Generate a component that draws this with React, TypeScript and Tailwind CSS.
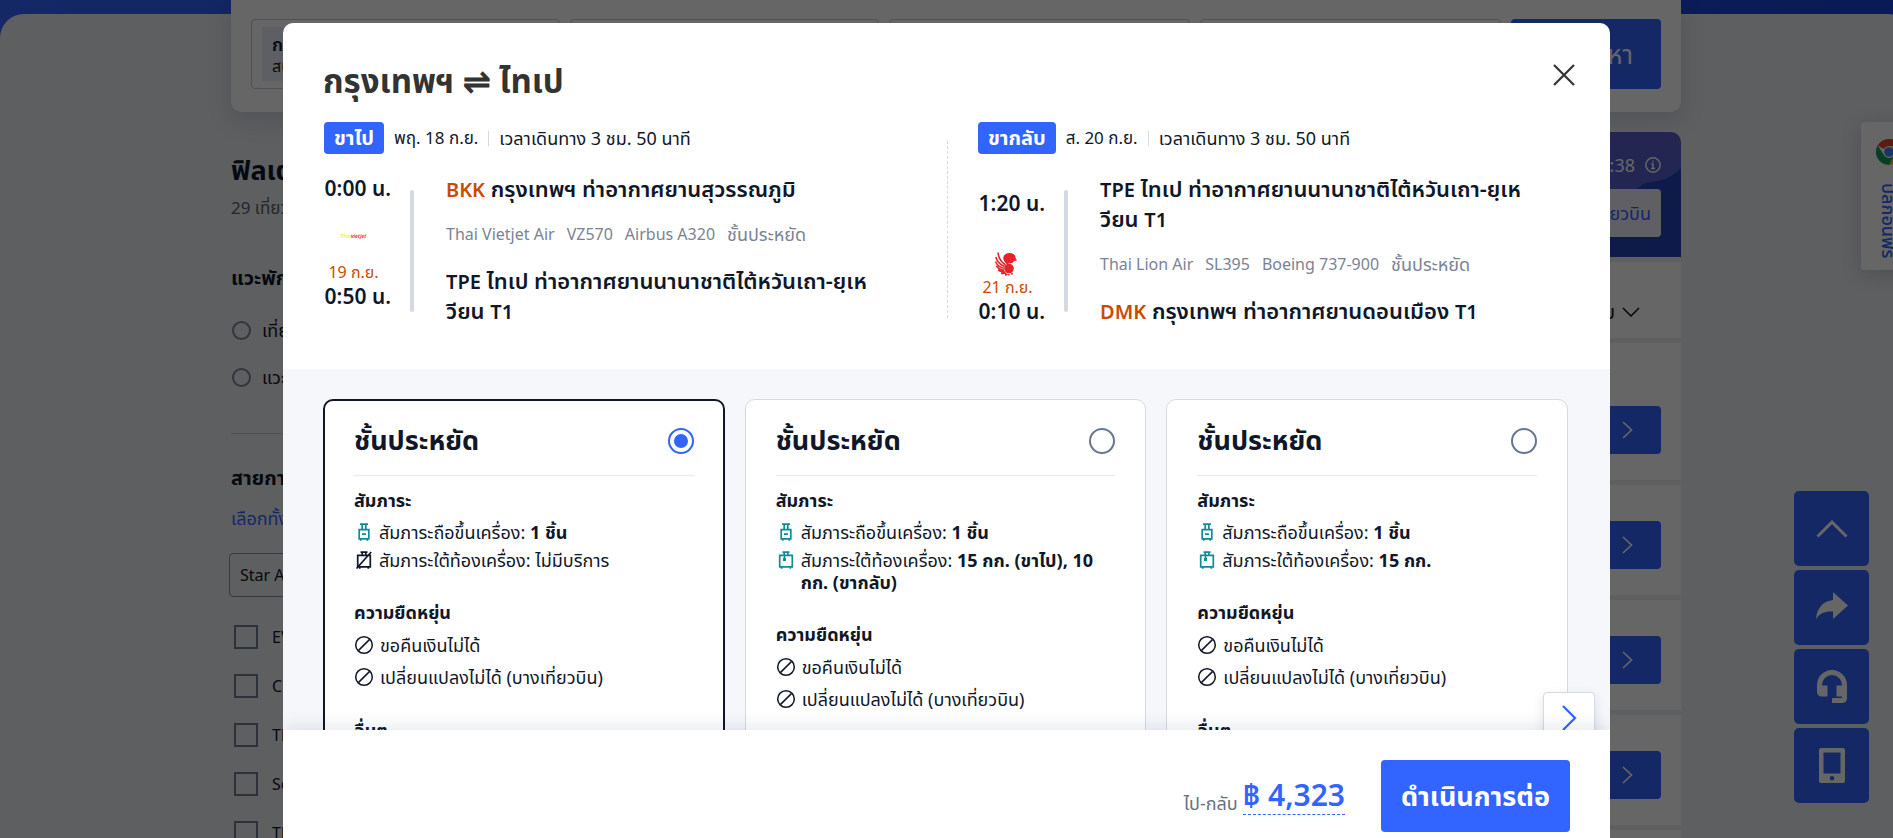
import type { ReactNode } from "react";

type Leg = {
    label: string;
    date: string;
    depart: string;
    arrive: string;
    arriveDate: string;
    from: ReactNode;
    to: ReactNode;
    details: string[];
    logo: ReactNode;
    tall?: boolean;
};

type Fare = {
    id: string;
    checked: ReactNode;
    noBag?: boolean;
};

const Code = ({ children }: { children: ReactNode }) => <span className="text-xl leading-none text-[#cc4a00]">{children}</span>;

const VietjetLogo = () => (
    <svg viewBox="0 0 28 8" className="h-2 w-7" aria-label="Thai Vietjet Air">
        <text x="0" y="6" fontSize="6" fontStyle="italic" fontWeight="700" fill="#fbf04a">Thai</text>
        <text x="11" y="6" fontSize="5" fontStyle="italic" fontWeight="700" fill="#f0323c">vietjet</text>
    </svg>
);

const LionLogo = () => (
    <svg viewBox="0 0 22 24" className="h-6 w-[22px]" aria-label="Thai Lion Air">
        <path d="M8.500 4.500C10 1 15 0 18.500 2c1.500 1 2 2.500 2 4l1.500 2.500-3 .5c-.5 1.500-2 2.200-4 2.200-1.200 0-2 .3-3 1.300C9.500 10.500 7.500 7.500 8.500 4.500z" fill="#e8222b" />
        <circle cx="14" cy="16.500" r="4.800" fill="#e8222b" />
        <path d="M3 .5c.5 5 3 9.500 7.500 12.500M.8 5c1 4 4 7.500 8.700 9.500M.5 9.500c1.500 3.500 4.500 6 8.500 6.800M1.200 14c2 2.500 4.500 4 8 4.200M3 18c2 1.300 4 2 6.800 1.900M6 21.200c1.600.4 3.200.2 5-.2M10 23.300l2.500-1.300M14 23.500v-1.500M17.500 22.500l-1-1.500" fill="none" stroke="#e8222b" strokeWidth="1.600" />
    </svg>
);

const CabinBag = () => (
    <svg viewBox="0 0 18 18" className="h-[18px] w-[18px]" fill="none" stroke="#0f8c94" strokeWidth="1.700">
        <path d="M5 1.200h8M7.200 1.500v5M10.800 1.500v5M4.200 6.700h9.600v9.200H4.200zM7 11.200h4M5.700 16v1.800M12.300 16v1.800" />
    </svg>
);

const CheckedBag = () => (
    <svg viewBox="0 0 18 18" className="h-[18px] w-[18px]" fill="none" stroke="#0f8c94" strokeWidth="1.700">
        <path d="M5.500 1.200h7M7.200 1.500v3M10.800 1.500v3M2.700 4.300h12.600v11.600H2.700zM4.700 16v1.800M13.300 16v1.800" />
        <path d="M6 7h3v3H6z" fill="#0f8c94" stroke="none" />
        <path d="M7.500 4v3" />
    </svg>
);

const NoBag = () => (
    <svg viewBox="0 0 18 18" className="h-[18px] w-[18px]" fill="none" stroke="#0f1728" strokeWidth="1.700">
        <path d="M5.500 1.200h7M7.200 1.500v3M10.800 1.500v3M2.700 4.300h12.600v11.600H2.700zM4.700 16v1.800M13.300 16v1.800M1.500 17.500L16.200 1" />
    </svg>
);

const Ban = () => (
    <svg viewBox="0 0 20 20" className="h-5 w-5 shrink-0" fill="none" stroke="#0f1728" strokeWidth="1.500">
        <circle cx="10" cy="10" r="8.300" />
        <path d="M4.600 15.400L15.400 4.600" />
    </svg>
);

const ChromeLogo = () => (
    <svg viewBox="0 0 26 26" className="h-[26px] w-[26px] shrink-0">
        <path d="M13 13L1.700 6.500A13 13 0 0 1 24.300 6.500z" fill="#ea4335" />
        <path d="M13 7h11.500A13 13 0 0 1 13 26l6-10z" fill="#fbbc05" />
        <path d="M13 19v7A13 13 0 0 1 1.700 6.500L8 16zM13 26l5.500-10L13 13z" fill="#0f9d58" />
        <circle cx="13" cy="13" r="6" fill="#fff" />
        <circle cx="13" cy="13" r="4.800" fill="#4285f4" />
    </svg>
);

const airportTpe = (
    <>
        <span className="text-xl leading-none">TPE</span> ไทเป ท่าอากาศยานนานาชาติไต้หวันเถา-ยฺเห
        <br />
        วียน <span className="text-xl leading-none">T1</span>
    </>
);

const legs: Leg[] = [
    {
        label: "ขาไป",
        date: "พฤ. 18 ก.ย.",
        depart: "20:00 น.",
        arrive: "00:50 น.",
        arriveDate: "19 ก.ย.",
        from: <><Code>BKK</Code> กรุงเทพฯ ท่าอากาศยานสุวรรณภูมิ</>,
        to: airportTpe,
        details: ["Thai Vietjet Air", "VZ570", "Airbus A320"],
        logo: <VietjetLogo />,
    },
    {
        label: "ขากลับ",
        date: "ส. 20 ก.ย.",
        depart: "21:20 น.",
        arrive: "00:10 น.",
        arriveDate: "21 ก.ย.",
        from: airportTpe,
        to: <><Code>DMK</Code> กรุงเทพฯ ท่าอากาศยานดอนเมือง <span className="text-xl leading-none">T1</span></>,
        details: ["Thai Lion Air", "SL395", "Boeing 737-900"],
        logo: <LionLogo />,
        tall: true,
    },
];

const fares: Fare[] = [
    { id: "fare-1", checked: "ไม่มีบริการ", noBag: true },
    { id: "fare-2", checked: <b>15 กก. (ขาไป), 10 กก. (ขากลับ)</b> },
    { id: "fare-3", checked: <b>15 กก.</b> },
];

const airlines = ["EVA Air", "China Airlines", "Thai Lion Air", "Scoot", "Thai Vietjet Air"];

function SearchBar() {
    return (
        <div className="mx-auto flex h-28 w-[1450px] items-start gap-[10px] rounded-b-[10px] bg-white px-5 pt-[19px] shadow-[0_8px_24px_rgba(15,41,77,0.16)]">
            <div className="h-[70px] w-[309px] rounded border border-[#c5cad5] px-[10px] py-[7px]">
                <div className="h-[54px] bg-[#eceefa] px-[10px] pt-[5px]">
                    <p className="text-lg leading-6 font-semibold">กรุงเทพฯ</p>
                    <p className="text-base leading-5">สนามบินทั้งหมด</p>
                </div>
            </div>
            <div className="h-[70px] w-[309px] rounded border border-[#c5cad5]" />
            <div className="h-[70px] flex-1 rounded border border-[#c5cad5]" />
            <div className="h-[70px] flex-1 rounded border border-[#c5cad5]" />
            <button className="h-[70px] w-[150px] rounded bg-[#3264ff] pr-7 text-right text-[26px] text-white">ค้นหา</button>
        </div>
    );
}

function Filters() {
    return (
        <aside className="w-[310px] shrink-0 pt-[22px]">
            <h2 className="text-[27px] leading-8 font-bold">ฟิลเตอร์</h2>
            <p className="mt-[10px] text-[17px] leading-6 text-[#5a6172]">29 เที่ยวบิน</p>
            <h3 className="mt-[46px] text-xl leading-6 font-bold">แวะพัก</h3>
            {["เที่ยวบินตรง", "แวะพัก 1 ครั้ง"].map((stop, i) => (
                <div key={stop} className={i === 0 ? "mt-[28px] flex h-6 items-center gap-[11px]" : "mt-[23px] flex h-6 items-center gap-[11px]"}>
                    <input type="radio" name="stops" id={stop} className="ml-px h-[19px] w-[19px] appearance-none rounded-full border-2 border-[#7c879c]" />
                    <label htmlFor={stop} className="text-lg">{stop}</label>
                </div>
            ))}
            <hr className="mt-11 border-[#c5cad5]" />
            <h3 className="mt-8 text-xl leading-6 font-bold">สายการบิน</h3>
            <button className="mt-4 block text-lg leading-6 text-[#3264ff]">เลือกทั้งหมด</button>
            <select aria-label="พันธมิตรสายการบิน" className="mt-[23px] -ml-[2px] block h-11 w-full appearance-none rounded border border-[#8592a6] px-[10px] text-base">
                <option>Star Alliance</option>
            </select>
            <div className="mt-7 flex flex-col gap-[25px]">
                {airlines.map((name) => (
                    <label key={name} className="flex h-6 items-center gap-[14px] text-base whitespace-nowrap">
                        <input type="checkbox" className="ml-[3px] h-6 w-6 appearance-none border-2 border-[#707c92]" />
                        {name}
                    </label>
                ))}
            </div>
        </aside>
    );
}

function Results() {
    return (
        <div className="flex flex-1 flex-col gap-[5px]">
            <div className="relative flex h-[125px] flex-col items-end overflow-hidden rounded-t-[10px] bg-linear-to-b from-[#5a5fc8] to-[#565cd8] px-5 pt-5 text-white">
                <svg viewBox="0 0 140 125" className="absolute right-0 bottom-0 h-[125px] w-[140px]">
                    <path d="M140 36c-8 8-16 12-24 13-8 2-14 1-17 6-12 8-60 20-99 24v46h140z" fill="#2543b8" />
                </svg>
                <div className="relative flex h-[26px] items-center gap-[10px] text-lg">
                    05:12:38
                    <svg viewBox="0 0 16 16" className="h-4 w-4" fill="none" stroke="currentColor" strokeWidth="1.500">
                        <circle cx="8" cy="8" r="7.200" />
                        <path d="M6.200 7H8v4.400M6 11.600h4M7.200 4.400h1.400" />
                    </svg>
                </div>
                <button className="relative mt-[11px] h-12 rounded bg-[#eff0fb] px-[10px] text-lg text-[#3264ff]">ค้นหาเที่ยวบิน</button>
            </div>
            <div className="flex h-[76px] items-center justify-end gap-[7px] bg-white pt-6 pr-[41px]">
                <div className="text-xl leading-6">เรียงลำดับ</div>
                <svg viewBox="0 0 18 10" className="h-[10px] w-[18px]" fill="none" stroke="currentColor" strokeWidth="1.600"><path d="M1 1l8 8 8-8" /></svg>
            </div>
            {[0, 1, 2, 3, 4].map((n) => (
                <div key={n} className={n === 0 ? "flex h-[137px] items-end justify-end bg-white px-5 pb-[26px]" : "flex h-[110px] items-end justify-end bg-white px-5 pb-[26px]"}>
                    <button className="flex h-12 w-[150px] items-center justify-end gap-3 rounded bg-[#3264ff] pr-7 text-xl text-white">
                        เลือก
                        <svg viewBox="0 0 11 18" className="h-[18px] w-[11px]" fill="none" stroke="currentColor" strokeWidth="1.700"><path d="M1 1l8.500 8L1 17" /></svg>
                    </button>
                </div>
            ))}
        </div>
    );
}

function SideTools() {
    return (
        <>
            <a href="#plugin" className="absolute top-[122px] left-[calc(100%-32px)] flex h-[148px] w-14 flex-col items-center gap-[18px] rounded-l-[3px] bg-white pt-[17px] text-[#3264ff] shadow-[0_4px_20px_rgba(15,41,77,0.2)]">
                <ChromeLogo />
                <span className="text-lg leading-5 font-medium whitespace-nowrap [writing-mode:vertical-rl]">ปลั๊กอินฟรี</span>
            </a>
            <div className="absolute top-[491px] right-6 flex flex-col gap-1">
                <button aria-label="กลับด้านบน" className="grid h-[75px] w-[75px] place-items-center rounded-[5px] bg-[#3264ff] text-white">
                    <svg viewBox="0 0 32 18" className="h-[18px] w-8" fill="none" stroke="currentColor" strokeWidth="3"><path d="M1.500 16.500L16 2.200l14.500 14.300" /></svg>
                </button>
                <button aria-label="แชร์" className="grid h-[75px] w-[75px] place-items-center rounded-[5px] bg-[#3264ff] pb-1 text-white">
                    <svg viewBox="0 0 32 27" className="h-[27px] w-8" fill="currentColor"><path d="M17 0l15 13.500L17 27v-7.500C9 19 4 21 0 27 1 16 7 9 17 8z" /></svg>
                </button>
                <button aria-label="บริการลูกค้า" className="grid h-[75px] w-[75px] place-items-center rounded-[5px] bg-[#3264ff] text-white">
                    <svg viewBox="0 0 30 33" className="h-[33px] w-[30px]" fill="currentColor"><path d="M15 0C6.700 0 0 6.700 0 15v7a4.500 4.500 0 0 0 4.500 4.500H10.500V15.500H5V15a10 10 0 0 1 20 0v.5h-5.500v11H25V28H15v5h10.500a4.500 4.500 0 0 0 4.500-4.500V15C30 6.700 23.300 0 15 0z" /></svg>
                </button>
                <button aria-label="แอป" className="grid h-[75px] w-[75px] place-items-center rounded-[5px] bg-[#3264ff] text-white">
                    <svg viewBox="0 0 26 35" className="h-[35px] w-[26px]" fill="currentColor" fillRule="evenodd"><path d="M2 0h22a2 2 0 0 1 2 2v31a2 2 0 0 1-2 2H2a2 2 0 0 1-2-2V2a2 2 0 0 1 2-2zM4.500 4.500V25.500h17V4.500zM13 28a2.200 2.200 0 1 0 0 4.400 2.200 2.200 0 0 0 0-4.400z" /></svg>
                </button>
            </div>
        </>
    );
}

function LegInfo({ leg }: { leg: Leg }) {
    return (
        <section>
            <div className="flex h-8 items-center text-[17px] text-[#0f1728]">
                <span className="mr-[10px] flex h-8 items-center rounded bg-[#3264ff] px-[10px] text-xl font-bold text-white">{leg.label}</span>
                {leg.date}
                <span className="mx-[10px] h-[15px] w-px bg-[#d5d9e2]" />
                <span className="text-lg">เวลาเดินทาง 3 ชม. 50 นาที</span>
            </div>
            <div className="mt-[19px] flex text-[21px] font-semibold text-[#0f1728]">
                <div className="flex w-[67px] flex-col items-end overflow-hidden">
                    <div className={leg.tall ? "flex h-[45px] items-end leading-[30px] whitespace-nowrap" : "flex h-[30px] items-end leading-[30px] whitespace-nowrap"}>{leg.depart}</div>
                    <div className={leg.tall ? "grid h-[58px] w-full place-items-end justify-center pr-3" : "grid h-[58px] w-full place-items-center pt-2 pr-2"}>{leg.logo}</div>
                    <div className="w-full pr-2 text-center text-base leading-[22px] font-normal text-[#cc4a00]">{leg.arriveDate}</div>
                    <div className="leading-[26px] whitespace-nowrap">{leg.arrive}</div>
                </div>
                <div className="mt-[17px] ml-[19px] h-[122px] w-1 rounded-full bg-[#d5d9e2]" />
                <div className="ml-8 text-[22px] font-semibold">
                    <p className="leading-[30px]">{leg.from}</p>
                    <p className="my-4 flex h-[30px] gap-3 text-base leading-[30px] font-normal text-[#7b8294]">
                        {leg.details.map((d) => <span key={d}>{d}</span>)}
                        <span className="text-lg leading-[30px]">ชั้นประหยัด</span>
                    </p>
                    <p className="leading-[30px]">{leg.to}</p>
                </div>
            </div>
        </section>
    );
}

function FareCard({ fare, selected }: { fare: Fare; selected: boolean }) {
    return (
        <div className={selected ? "h-[480px] rounded-[10px] border-2 border-[#0f1728] bg-white px-[29px] pt-[17px]" : "h-[480px] rounded-[10px] border border-[#d5d9e2] bg-white px-[30px] pt-[18px]"}>
            <div className="flex h-[58px] items-center justify-between border-b border-[#e8eaef] pb-3">
                <label htmlFor={fare.id} className="text-[27px] font-bold">ชั้นประหยัด</label>
                <input
                    type="radio"
                    name="fare"
                    id={fare.id}
                    defaultChecked={selected}
                    className="h-[26px] w-[26px] appearance-none rounded-full border-2 border-[#667791] bg-clip-content p-1 checked:border-[#3264ff] checked:bg-[#3264ff]"
                />
            </div>
            <h4 className="mt-3 text-lg leading-6 font-bold">สัมภาระ</h4>
            <ul className="mt-[9px] flex flex-col gap-[6px] text-lg leading-[22px]">
                <li className="flex gap-[5px]">
                    <span className="flex h-[22px] w-5 shrink-0 items-center justify-center"><CabinBag /></span>
                    <span>สัมภาระถือขึ้นเครื่อง: <b>1 ชิ้น</b></span>
                </li>
                <li className="flex gap-[5px]">
                    <span className="flex h-[22px] w-5 shrink-0 items-center justify-center">{fare.noBag ? <NoBag /> : <CheckedBag />}</span>
                    <span>สัมภาระใต้ท้องเครื่อง: {fare.checked}</span>
                </li>
            </ul>
            <h4 className="mt-[29px] text-lg leading-6 font-bold">ความยืดหยุ่น</h4>
            <ul className="mt-[10px] flex flex-col gap-[10px] text-lg leading-[22px]">
                <li className="flex items-center gap-[6px]"><Ban />ขอคืนเงินไม่ได้</li>
                <li className="flex items-center gap-[6px]"><Ban />เปลี่ยนแปลงไม่ได้ (บางเที่ยวบิน)</li>
            </ul>
            <h4 className="mt-[30px] text-lg leading-6 font-bold">อื่นๆ</h4>
        </div>
    );
}

export default function App() {
    return (
        <div className="relative h-screen overflow-hidden bg-linear-to-r from-[#3264ff] to-[#1a42d6] font-['Noto_Sans','Noto_Sans_Thai',sans-serif] text-[#0f1728]">
            {/* Search results page */}
            <main className="h-full w-[calc(100%+19px)] pt-[14px]">
                <div className="flex h-full flex-col rounded-t-3xl bg-[#eaedf1]">
                    <div className="-mt-[14px]">
                        <SearchBar />
                        <div className="mx-auto mt-5 flex w-[1450px] gap-5">
                            <Filters />
                            <Results />
                        </div>
                    </div>
                </div>
            </main>
            <SideTools />

            {/* Fare dialog */}
            <div className="absolute inset-0 flex justify-center bg-black/60 pt-[23px]">
                <div role="dialog" aria-labelledby="route" className="relative flex w-full max-w-[1327px] flex-col overflow-hidden rounded-t-[10px] bg-white">
                    <header className="shrink-0 px-10 pb-11">
                        <div className="flex h-[99px] items-start justify-between pt-[37px]">
                            <h1 id="route" className="text-[33px] leading-[42px] font-bold text-[#333]">กรุงเทพฯ ⇌ ไทเป</h1>
                            <button aria-label="ปิด" className="-mr-[9px] p-1 text-[#333]">
                                <svg viewBox="0 0 22 22" className="h-[22px] w-[22px]" fill="none" stroke="currentColor" strokeWidth="2.200"><path d="M1 1l20 20M21 1L1 21" /></svg>
                            </button>
                        </div>
                        <div className="grid grid-cols-[623px_1fr] pl-px">
                            <LegInfo leg={legs[0]} />
                            <div className="flex">
                                <div className="mt-[19px] mr-[30px] h-[177px] border-l border-dashed border-[#d5d9e2]" />
                                <LegInfo leg={legs[1]} />
                            </div>
                        </div>
                    </header>
                    <div className="relative min-h-0 flex-1 overflow-hidden bg-[#f5f7fb] pt-[30px] pr-[42px] pl-10">
                        <div className="grid grid-cols-3 gap-5">
                            {fares.map((fare, i) => <FareCard key={fare.id} fare={fare} selected={i === 0} />)}
                        </div>
                        <button aria-label="ถัดไป" className="absolute top-[323px] right-[15px] grid h-[52px] w-[52px] place-items-center rounded border border-[#d5dae6] bg-white text-[#3264ff] shadow-[0_4px_12px_rgba(15,41,77,0.12)]">
                            <svg viewBox="0 0 15 26" className="h-[26px] w-[15px]" fill="none" stroke="currentColor" strokeWidth="2.200"><path d="M1 1l12 12L1 25" /></svg>
                        </button>
                    </div>
                    <footer className="relative flex h-[108px] shrink-0 items-start justify-end bg-white pt-[30px] pr-10 shadow-[0_-4px_16px_rgba(15,41,77,0.1)]">
                        <div className="flex items-end gap-[5px] pt-4">
                            <span className="text-lg leading-6 text-[#667080]">ไป-กลับ</span>
                            <span className="border-b border-dashed border-[#3264ff] text-[30px] leading-[38px] font-semibold text-[#3264ff]">฿ 4,323</span>
                        </div>
                        <button className="ml-9 h-[72px] w-[189px] rounded bg-[#3264ff] text-[27px] font-bold text-white">ดำเนินการต่อ</button>
                    </footer>
                </div>
            </div>
        </div>
    );
}
